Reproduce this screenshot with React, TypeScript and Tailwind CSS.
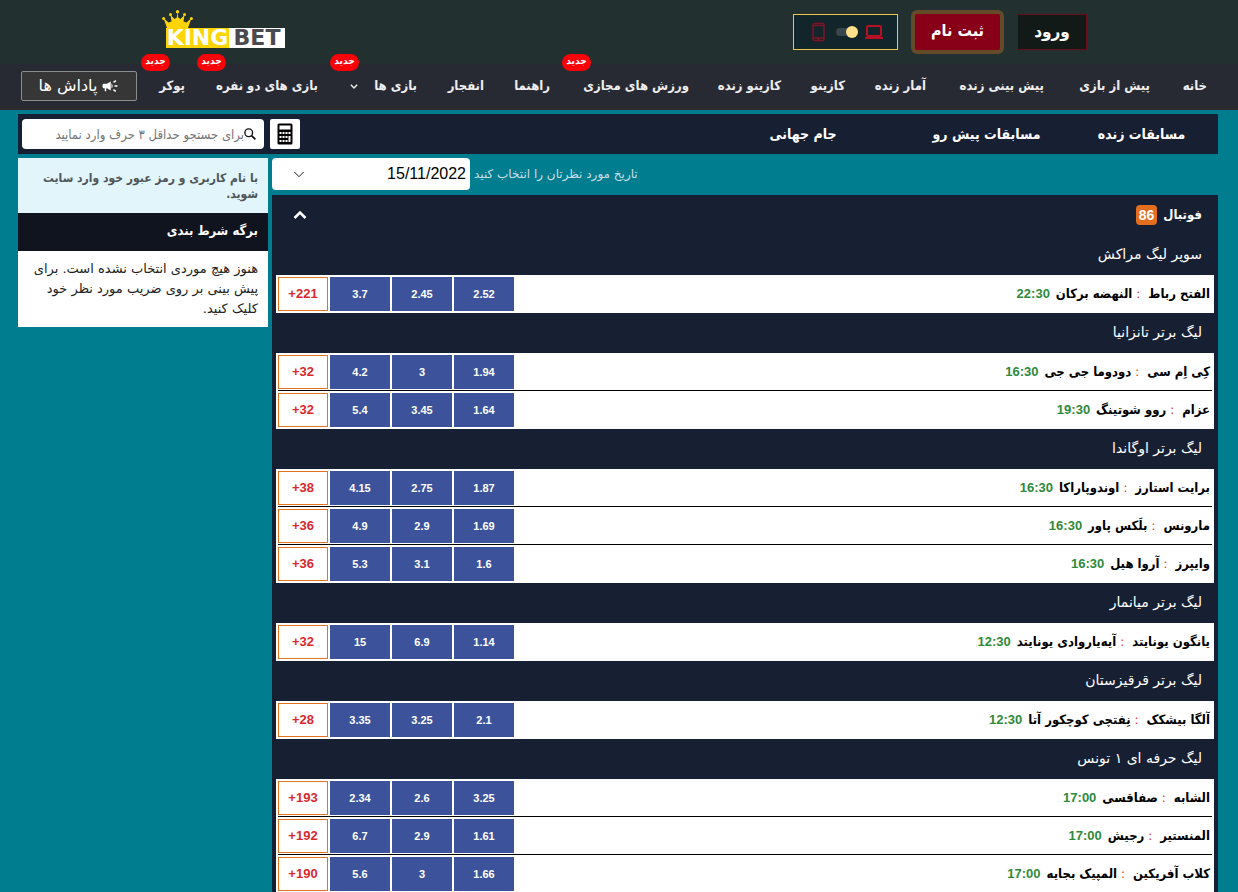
import React from "react";
import { MdCampaign } from "react-icons/md";

type NavItem = { label: string; width: string; isNew?: boolean; menu?: boolean };
type Match = { home: string; away: string; time: string; odds: string[]; more: string };
type League = { name: string; matches: Match[] };

const NAV: NavItem[] = [
  { label: "خانه", width: "w-[25px]" },
  { label: "پیش از بازی", width: "w-[74px]" },
  { label: "پیش بینی زنده", width: "w-[86px]" },
  { label: "آمار زنده", width: "w-[49px]" },
  { label: "کازینو", width: "w-[32px]" },
  { label: "کازینو زنده", width: "w-[60px]" },
  { label: "ورزش های مجازی", width: "w-[107px]", isNew: true },
  { label: "راهنما", width: "w-[34px]" },
  { label: "انفجار", width: "w-[35px]" },
  { label: "بازی ها", width: "w-[67px]", isNew: true, menu: true },
  { label: "بازی های دو نفره", width: "w-[101px]", isNew: true },
  { label: "پوکر", width: "w-[24px]", isNew: true },
];

const LEAGUES: League[] = [
  {
    name: "سوپر لیگ مراکش",
    matches: [{ home: "الفتح رباط", away: "النهضه برکان", time: "22:30", odds: ["2.52", "2.45", "3.7"], more: "+221" }],
  },
  {
    name: "لیگ برتر تانزانیا",
    matches: [
      { home: "کِی اِم سی", away: "دودوما جی جی", time: "16:30", odds: ["1.94", "3", "4.2"], more: "+32" },
      { home: "عزام", away: "روو شوتینگ", time: "19:30", odds: ["1.64", "3.45", "5.4"], more: "+32" },
    ],
  },
  {
    name: "لیگ برتر اوگاندا",
    matches: [
      { home: "برایت استارز", away: "اوندوپاراکا", time: "16:30", odds: ["1.87", "2.75", "4.15"], more: "+38" },
      { home: "مارونس", away: "بلَکس پاور", time: "16:30", odds: ["1.69", "2.9", "4.9"], more: "+36" },
      { home: "وایپرز", away: "آروا هیل", time: "16:30", odds: ["1.6", "3.1", "5.3"], more: "+36" },
    ],
  },
  {
    name: "لیگ برتر میانمار",
    matches: [{ home: "یانگون یونایتد", away: "آیه‌یاروادی یونایتد", time: "12:30", odds: ["1.14", "6.9", "15"], more: "+32" }],
  },
  {
    name: "لیگ برتر قرقیزستان",
    matches: [{ home: "آلگا بیشکک", away: "نِفتچی کوچکور آتا", time: "12:30", odds: ["2.1", "3.25", "3.35"], more: "+28" }],
  },
  {
    name: "لیگ حرفه ای ۱ تونس",
    matches: [
      { home: "الشابه", away: "صفاقسی", time: "17:00", odds: ["3.25", "2.6", "2.34"], more: "+193" },
      { home: "المنستیر", away: "رجیش", time: "17:00", odds: ["1.61", "2.9", "6.7"], more: "+192" },
      { home: "کلاب آفریکین", away: "المپیک بجایه", time: "17:00", odds: ["1.66", "3", "5.6"], more: "+190" },
    ],
  },
];

function Logo() {
  return (
    <a href="#" dir="ltr" className="mb-1.5 flex flex-col items-start" aria-label="KINGBET">
      <svg width="31" height="18" viewBox="0 0 31 18" fill="#fdd406" aria-hidden="true">
        <path d="M5 18 1.500 8 6.500 12.500 9.500 11.500 8.500 5 12.500 9 14.800 7.500 15.500 1.500 16.200 7.500 18.500 9 22.500 5 21.500 11.500 24.500 12.500 29.500 8 26 18z" />
        <circle cx="1.600" cy="8.500" r="1.500" />
        <circle cx="8.500" cy="4.500" r="1.500" />
        <circle cx="15.500" cy="1.800" r="1.700" />
        <circle cx="22.500" cy="4.500" r="1.500" />
        <circle cx="29.400" cy="8.500" r="1.500" />
      </svg>
      <span className="ml-1 flex h-5 font-['DejaVu_Sans',sans-serif] text-[22px] font-bold leading-5">
        <span className="w-[63px] bg-[#fdd406] text-center text-white">KING</span>
        <span className="w-[56px] bg-white text-center text-[#4a4a4e]">BET</span>
      </span>
    </a>
  );
}

function DeviceSwitch() {
  return (
    <label className="flex h-9 w-[105px] cursor-pointer items-center justify-center gap-[7px] border border-[#f0c64a] bg-[#11252b] pl-0.5">
      <svg width="18" height="16" viewBox="0 0 18 16" fill="none" stroke="#b80f26" strokeWidth="2" aria-hidden="true">
        <rect x="2" y="2" width="14" height="10" rx="1" />
        <path d="M0 14h18" />
      </svg>
      <input type="checkbox" aria-label="نسخه دسکتاپ" className="sr-only" defaultChecked />
      <span className="flex h-2 w-[22px] items-center rounded-full bg-[#39474c]">
        <span className="size-3 shrink-0 rounded-full bg-[#ffe18a]" />
      </span>
      <svg width="18" height="20" viewBox="0 0 18 20" fill="none" stroke="#7d1525" strokeWidth="1.500" aria-hidden="true">
        <rect x="2" y="1.500" width="11" height="17" rx="1.500" />
        <path d="M2 3.500h11M2 16h11" />
        <path d="M6.500 17h2" strokeWidth="2" />
      </svg>
    </label>
  );
}

function Chevron({ up = false, className = "" }: { up?: boolean; className?: string }) {
  return (
    <svg viewBox="0 0 14 8" fill="none" stroke="currentColor" className={className} aria-hidden="true">
      <path d={up ? "M1.500 7 7 1.500 12.500 7" : "M1.500 1 7 6.500 12.500 1"} />
    </svg>
  );
}

function Header() {
  return (
    <header className="bg-[#282a33]">
      <div className="flex h-16 items-center justify-between bg-[#233030] pl-[162px] pr-[151px]">
        <div className="flex items-center gap-[13px]">
          <button type="button" className="h-9 w-[70px] border border-[#6b0c1a] bg-[#121a18] text-[17px] font-bold text-white">
            ورود
          </button>
          <button type="button" className="h-11 w-[93px] rounded-md border-4 border-[#634a29] bg-[#870017] pb-0.5 text-[16px] font-bold text-white">
            ثبت نام
          </button>
          <DeviceSwitch />
        </div>
        <Logo />
      </div>
      <div className="flex h-[46px] items-center justify-between border-b-2 border-[#302a2e] pl-[21px] pr-[31px]">
        <nav className="flex gap-8">
          {NAV.map((item) => (
            <a
              key={item.label}
              href="#"
              className={`${item.width} relative flex items-center justify-between whitespace-nowrap text-[13px] font-bold leading-5 text-[#eeeeef]`}
            >
              {item.label}
              {item.menu && <Chevron className="h-[5px] w-2 shrink-0 stroke-[2.500]" />}
              {item.isNew && (
                <span className="absolute -left-5 -top-[22px] h-[17px] w-[29px] rounded-full bg-[#fb0006] text-center text-[10px] leading-[14px] text-white">
                  جدید
                </span>
              )}
            </a>
          ))}
        </nav>
        <button type="button" className="flex h-[30px] w-[116px] items-center justify-center gap-1 rounded-xs border border-[#8d8d8d] bg-[#363636] font-['DejaVu_Sans',sans-serif] text-[16px] text-white">
          <MdCampaign className="size-[18px]" />
          پاداش ها
        </button>
      </div>
    </header>
  );
}

function Toolbar() {
  return (
    <div className="flex h-10 items-center bg-[#171f33] pl-1">
      <nav className="flex flex-1 text-center text-[14px] font-bold text-white">
        <a href="#" className="w-[153px]">مسابقات زنده</a>
        <a href="#" className="w-[157px]">مسابقات پیش رو</a>
        <a href="#" className="w-[210px]">جام جهانی</a>
      </nav>
      <button type="button" aria-label="ماشین حساب" className="flex h-[30px] w-[30px] items-center justify-center rounded-xs bg-white">
        <svg width="16" height="22" viewBox="0 0 16 22" aria-hidden="true">
          <rect x=".5" y=".5" width="15" height="21" rx="1.500" fill="#000" />
          <path fill="#fff" d="M2.500 2.500h11v4h-11zM2.500 9h2v2h-2zM5.500 9h2v2h-2zM8.500 9h2v2h-2zM11.500 9h2v2h-2zM2.500 13h2v2h-2zM5.500 13h2v2h-2zM8.500 13h2v2h-2zM11.500 13h2v6h-2zM2.500 17h2v2h-2zM5.500 17h2v2h-2zM8.500 17h2v2h-2z" />
        </svg>
      </button>
      <label className="mr-[6px] flex h-[30px] w-[242px] items-center rounded bg-white pr-2">
        <svg width="12" height="12" viewBox="0 0 14 14" fill="none" stroke="#111" strokeWidth="1.600" className="shrink-0" aria-hidden="true">
          <circle cx="5.500" cy="5.500" r="4.500" />
          <path d="m8.800 8.800 4.500 4.500" strokeWidth="2" />
        </svg>
        <input
          type="text"
          aria-label="جستجو"
          placeholder="برای جستجو حداقل ۳ حرف وارد نمایید"
          className="h-full min-w-0 flex-1 bg-transparent text-[13px] outline-none placeholder:text-[#757575]"
        />
      </label>
    </div>
  );
}

function MatchRow({ match, last }: { match: Match; last: boolean }) {
  const line = last ? "border-white" : "border-black";
  return (
    <tr>
      <th scope="row" className={`border-b ${line} px-0.5 text-right text-[13px] font-bold text-black`}>
        {match.home}
        <span className="ml-1 mr-2 font-normal text-[#d93025]">:</span>
        {match.away}
        <span className="mr-1.5 font-['Liberation_Sans',sans-serif] text-[13px] text-[#2f8a3c]">{match.time}</span>
      </th>
      {match.odds.map((odd, i) => (
        <td key={i} className={`border-b ${line} pb-px pl-0.5 pt-0.5`}>
          <button type="button" className="block h-[34px] w-full bg-[#3c539b] font-['Liberation_Sans',sans-serif] text-[11px] font-bold text-white">
            {odd}
          </button>
        </td>
      ))}
      <td className={`border-b ${line} pb-px pt-0.5`}>
        <button type="button" dir="ltr" className="block h-[34px] w-full border border-solid border-[#e3731f] bg-white font-['Liberation_Sans',sans-serif] text-[13px] font-bold text-[#d8292f]">
          {match.more}
        </button>
      </td>
    </tr>
  );
}

function MatchBoard() {
  return (
    <section className="bg-[#171f33] px-1 pb-1">
      <h2 className="flex h-10 items-center gap-1.5 pl-[17px] pr-3 text-[13px] font-bold text-white">
        فوتبال
        <span className="rounded bg-[#e36f1e] px-[3px] font-['Liberation_Sans',sans-serif] text-[14px] leading-5">86</span>
        <button type="button" aria-label="بستن" className="mr-auto">
          <Chevron up className="h-2 w-[14px] stroke-[2.500]" />
        </button>
      </h2>
      {LEAGUES.map((league) => (
        <div key={league.name}>
          <h3 className="h-10 pr-3 font-['DejaVu_Sans',sans-serif] text-[14px] leading-[38px] text-white">{league.name}</h3>
          <div className="bg-white px-0.5">
            <table className="w-full table-fixed border-separate border-spacing-0">
              <colgroup>
                <col />
                <col className="w-[62px]" />
                <col className="w-[62px]" />
                <col className="w-[62px]" />
                <col className="w-[50px]" />
              </colgroup>
              <tbody>
                {league.matches.map((m, i) => (
                  <MatchRow key={m.home} match={m} last={i === league.matches.length - 1} />
                ))}
              </tbody>
            </table>
          </div>
        </div>
      ))}
    </section>
  );
}

export default function App() {
  return (
    <div dir="rtl" lang="fa" className="h-screen overflow-hidden bg-[#007d8f] font-['DejaVu_Sans_Condensed','DejaVu_Sans',sans-serif]">
      <Header />
      <div className="pl-[18px] pr-5 pt-1">
        <Toolbar />
        <div className="mt-1 flex items-start gap-1">
          <main className="min-w-0 flex-1">
            <div className="mb-[5px] flex h-8 items-center justify-end gap-1">
              <label htmlFor="match-date" className="font-['DejaVu_Sans',sans-serif] text-[12px] text-[#c9dfe8]">
                تاریخ مورد نظرتان را انتخاب کنید
              </label>
              <div className="relative w-[198px]">
                <select id="match-date" className="block h-8 w-full appearance-none rounded bg-white px-1 font-['Liberation_Sans',sans-serif] text-[16px] text-black">
                  <option>15/11/2022</option>
                </select>
                <Chevron className="pointer-events-none absolute left-[21px] top-[13px] h-[7px] w-3 text-black" />
              </div>
            </div>
            <MatchBoard />
          </main>
          <aside className="w-[250px] shrink-0">
            <p className="bg-[#e1f5fb] px-[10px] pb-[11px] pt-3 text-[12px] font-bold leading-4 text-[#50555a]">
              با نام کاربری و رمز عبور خود وارد سایت شوید.
            </p>
            <h2 className="h-[38px] bg-[#10141f] px-[10px] text-[13px] font-bold leading-[36px] text-white">برگه شرط بندی</h2>
            <p className="bg-white px-[10px] pb-2 pt-2 font-['DejaVu_Sans',sans-serif] text-[13px] leading-5 text-[#222]">
              هنوز هیچ موردی انتخاب نشده است. برای پیش بینی بر روی ضریب مورد نظر خود کلیک کنید.
            </p>
          </aside>
        </div>
      </div>
    </div>
  );
}
